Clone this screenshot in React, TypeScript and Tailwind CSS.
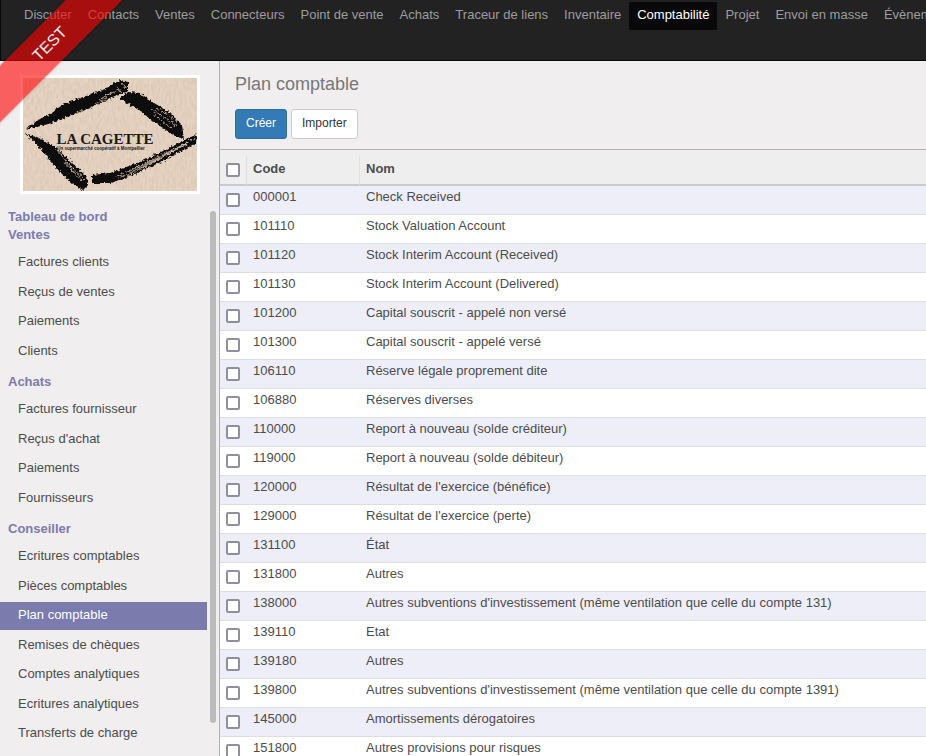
import { useState } from "react";
import clsx from "clsx";

interface MenuSection {
  title: string;
  items: string[];
}

interface Account {
  code: string;
  name: string;
}

const APPS = [
  "Discuter",
  "Contacts",
  "Ventes",
  "Connecteurs",
  "Point de vente",
  "Achats",
  "Traceur de liens",
  "Inventaire",
  "Comptabilité",
  "Projet",
  "Envoi en masse",
  "Évènements",
];

const SECTIONS: MenuSection[] = [
  { title: "Ventes", items: ["Factures clients", "Reçus de ventes", "Paiements", "Clients"] },
  { title: "Achats", items: ["Factures fournisseur", "Reçus d'achat", "Paiements", "Fournisseurs"] },
  {
    title: "Conseiller",
    items: [
      "Ecritures comptables",
      "Pièces comptables",
      "Plan comptable",
      "Remises de chèques",
      "Comptes analytiques",
      "Ecritures analytiques",
      "Transferts de charge",
    ],
  },
];

const ACCOUNTS: Account[] = [
  { code: "000001", name: "Check Received" },
  { code: "101110", name: "Stock Valuation Account" },
  { code: "101120", name: "Stock Interim Account (Received)" },
  { code: "101130", name: "Stock Interim Account (Delivered)" },
  { code: "101200", name: "Capital souscrit - appelé non versé" },
  { code: "101300", name: "Capital souscrit - appelé versé" },
  { code: "106110", name: "Réserve légale proprement dite" },
  { code: "106880", name: "Réserves diverses" },
  { code: "110000", name: "Report à nouveau (solde créditeur)" },
  { code: "119000", name: "Report à nouveau (solde débiteur)" },
  { code: "120000", name: "Résultat de l'exercice (bénéfice)" },
  { code: "129000", name: "Résultat de l'exercice (perte)" },
  { code: "131100", name: "État" },
  { code: "131800", name: "Autres" },
  { code: "138000", name: "Autres subventions d'investissement (même ventilation que celle du compte 131)" },
  { code: "139110", name: "Etat" },
  { code: "139180", name: "Autres" },
  { code: "139800", name: "Autres subventions d'investissement (même ventilation que celle du compte 1391)" },
  { code: "145000", name: "Amortissements dérogatoires" },
  { code: "151800", name: "Autres provisions pour risques" },
];

const CHECKBOX =
  "block size-[14px] appearance-none rounded-xs border-2 border-[#8f8f9d] bg-white checked:bg-[#337ab7]";

const Logo = () => (
  <svg viewBox="0 0 174 113" className="block w-full" role="img" aria-label="La Cagette">
    <defs>
      <filter id="paper" x="0" y="0" width="100%" height="100%">
        <feTurbulence type="fractalNoise" baseFrequency="0.45 0.15" numOctaves="2" seed="4" />
        <feColorMatrix values="0 0 0 0 0.55  0 0 0 0 0.45  0 0 0 0 0.36  0.7 0 0 0 -0.22" />
      </filter>
      <filter id="charcoal" x="-5%" y="-5%" width="110%" height="110%">
        <feTurbulence type="fractalNoise" baseFrequency="0.4" numOctaves="2" seed="7" result="n" />
        <feDisplacementMap in="SourceGraphic" in2="n" scale="5" xChannelSelector="R" yChannelSelector="G" />
      </filter>
    </defs>
    <rect width="174" height="113" fill="#e6d3c2" />
    <rect width="174" height="113" filter="url(#paper)" />
    <g filter="url(#charcoal)">
      <g fill="#0d0b0a">
        <path d="M2 51 17 41 29 35 39 27 60 19 82 11 97 2 105 4 105 13 88 20 62 32 37 42 22 47Z" />
        <path d="M97 20 105 14 117 15 128 23 147 35 159 47 161 61 152 58 137 48 114 31 102 24Z" />
        <path d="M1 55 17 60 32 69 46 82 64 99 65 107 60 112 51 107 38 95 22 76 12 64Z" />
        <path d="M69 97 87 95 117 84 140 73 174 56 173 65 138 84 103 100 88 105 69 105Z" />
      </g>
      <g fill="none" stroke="#e0cab5" strokeWidth="0.8">
        <path d="M32 44 46 38M50 37 60 32M72 26 84 20M76 22 86 16M84 17 96 12M93 8 99 15M99 5 103 11" />
        <path d="M128 31 154 48M134 30 156 44M130 36 148 50" />
        <path d="M34 72 50 91M40 82 60 104M47 88 62 102" />
        <path d="M92 99 130 82M98 99 150 73M104 98 168 63M120 90 172 61M135 79 170 62M112 90 136 78" />
      </g>
    </g>
    <text
      x="82"
      y="66"
      textAnchor="middle"
      fontSize="15"
      className="font-['Liberation_Serif',serif] font-bold"
      fill="#1d1815"
    >
      LA CAGETTE
    </text>
    <text
      x="78"
      y="72"
      textAnchor="middle"
      fontSize="4.5"
      className="font-['Liberation_Sans',sans-serif] font-bold"
      fill="#1d1815"
    >
      Un supermarché coopératif à Montpellier
    </text>
  </svg>
);

const App = () => {
  const [activeApp, setActiveApp] = useState("Comptabilité");
  const [activeItem, setActiveItem] = useState("Conseiller/Plan comptable");

  return (
    <div className="relative flex h-screen flex-col overflow-hidden bg-[#f0eeee] font-['Liberation_Sans',Arial,sans-serif] text-[13px] leading-[18px] text-[#4c4c4c]">
      {/* Apps bar */}
      <nav className="h-[61px] shrink-0 overflow-hidden border-b border-l border-[#080808] bg-[#222222] pt-0.5 pl-[15px]">
        <ul className="flex">
          {APPS.map((app) => (
            <li key={app} className="shrink-0">
              <a
                href="#"
                onClick={() => setActiveApp(app)}
                className={clsx(
                  "block px-2 pt-1 pb-1.5",
                  app === activeApp ? "bg-[#080808] text-white" : "text-[#9d9d9d]"
                )}
              >
                {app}
              </a>
            </li>
          ))}
        </ul>
      </nav>

      <div className="flex min-h-0 flex-1">
        {/* Sidebar */}
        <aside className="relative w-[220px] shrink-0 overflow-hidden border-r border-[#afafb6]">
          <a href="#" className="mx-5 mt-3.5 mb-3.5 block w-[180px] border-3 border-white">
            <Logo />
          </a>
          <div className="mr-3">
            <a href="#" className="block px-2 font-bold text-[#7c7bad]">
              Tableau de bord
            </a>
            {SECTIONS.map((section) => (
              <section key={section.title} className="mb-2">
                <h2 className="px-2 font-bold text-[#7c7bad]">{section.title}</h2>
                <ul className="pt-[3px]">
                  {section.items.map((item) => {
                    const id = `${section.title}/${item}`;
                    return (
                      <li key={item} className="pt-0.5">
                        <a
                          href="#"
                          onClick={() => setActiveItem(id)}
                          className={clsx(
                            "block pt-[3px] pb-[5px] pl-[18px] leading-normal",
                            id === activeItem && "bg-[#7c7bad] text-white"
                          )}
                        >
                          {item}
                        </a>
                      </li>
                    );
                  })}
                </ul>
              </section>
            ))}
          </div>
          {/* scroll thumb */}
          <div className="absolute top-[150px] right-[3px] h-[512px] w-1.5 rounded-full bg-[#bbbbbb]" />
        </aside>

        {/* Content */}
        <main className="min-w-0 flex-1 overflow-hidden bg-white">
          <header className="border-b border-[#afafb6] bg-[#f0eeee] px-[15px] pt-[11px] pb-2.5">
            <h1 className="text-lg leading-6 text-[#777777]">Plan comptable</h1>
            <div className="mt-[13px] flex gap-1 text-xs">
              <button className="h-[30px] rounded-[3px] border border-[#2e6da4] bg-[#337ab7] px-2.5 pb-0.5 text-white">
                Créer
              </button>
              <button className="h-[30px] rounded-[3px] border border-[#cccccc] bg-white px-2.5 pb-0.5 text-[#333333]">
                Importer
              </button>
            </div>
          </header>

          <div className="bg-[#eeeeee] pt-1.5">
            <table className="w-full table-fixed border-separate border-spacing-0 bg-white text-left">
              <thead>
                <tr className="h-[30px] bg-[#eeeeee]">
                  <th className="w-[26px] border-b-2 border-[#cacaca] pl-1.5">
                    <input type="checkbox" aria-label="Tout sélectionner" className={CHECKBOX} />
                  </th>
                  <th className="w-[113px] border-b-2 border-l border-b-[#cacaca] border-l-[#dfdfdf] pb-0.5 pl-1.5">
                    Code
                  </th>
                  <th className="border-b-2 border-l border-b-[#cacaca] border-l-[#dfdfdf] pb-0.5 pl-1.5">Nom</th>
                </tr>
              </thead>
              <tbody>
                {ACCOUNTS.map((account) => (
                  <tr key={account.code} className="h-[29px] odd:bg-[#eeeef8]">
                    <td className="border-b border-[#dddddd] pl-1.5">
                      <input type="checkbox" aria-label={account.code} className={CHECKBOX} />
                    </td>
                    <td className="border-b border-[#dddddd] pb-1.5 pl-[7px]">{account.code}</td>
                    <td className="truncate border-b border-[#dddddd] pb-1.5 pl-[7px]">{account.name}</td>
                  </tr>
                ))}
              </tbody>
            </table>
          </div>
        </main>
      </div>

      {/* Environment ribbon */}
      <div className="pointer-events-none absolute top-6 -left-[50px] w-[200px] -rotate-45 bg-[#ff0000]/60 text-center font-['Liberation_Sans',sans-serif] text-base leading-10 text-[#f0f0f0] shadow-[0_0_3px_rgba(0,0,0,0.3)]">
        TEST
      </div>
    </div>
  );
};

export default App;
